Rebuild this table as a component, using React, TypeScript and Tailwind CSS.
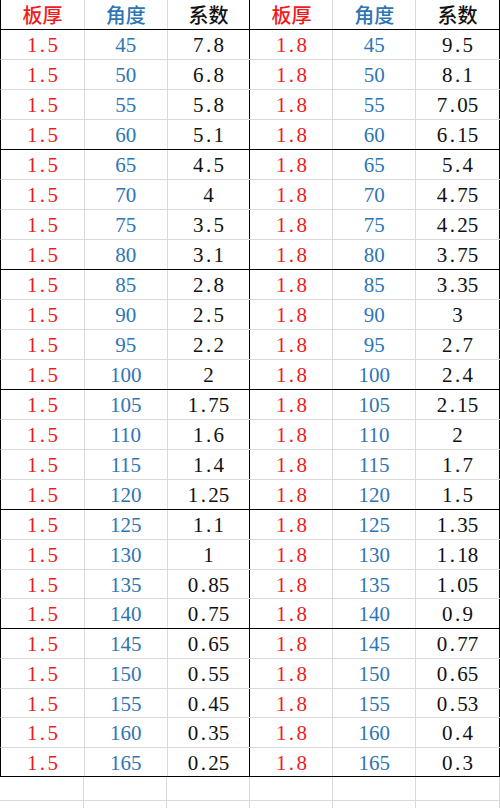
import React from "react";

const left = ["7.8","6.8","5.8","5.1","4.5","4","3.5","3.1","2.8","2.5","2.2","2","1.75","1.6","1.4","1.25","1.1","1","0.85","0.75","0.65","0.55","0.45","0.35","0.25"];
const right = ["9.5","8.1","7.05","6.15","5.4","4.75","4.25","3.75","3.35","3","2.7","2.4","2.15","2","1.7","1.5","1.35","1.18","1.05","0.9","0.77","0.65","0.53","0.4","0.3"];

const RED = "text-[#f21b1b]";
const BLUE = "text-[#2e75b6]";
const BLACK = "text-[#111111]";

function Num({ s }: { s: string }) {
  return (
    <span className="whitespace-nowrap pt-[2px]">
      {s.split("").map((c, i) =>
        c === "." ? (
          <span key={i} className="inline-block w-[10px] text-center">.</span>
        ) : (
          <span key={i}>{c}</span>
        )
      )}
    </span>
  );
}

function Cell({ children, color, black, w }: { children?: React.ReactNode; color?: string; black?: boolean; w: string }) {
  return (
    <div
      className={`${w} h-full flex items-center justify-center border-r ${black ? "border-r-black" : "border-r-[#dadada]"} ${color ?? ""}`}
    >
      {children}
    </div>
  );
}

const widths = ["w-[84px]", "w-[83px]", "w-[83px]", "w-[83px]", "w-[83px]", "w-[84px]"];

function Row({ vals, h, sep }: { vals: string[]; h: string; sep?: boolean }) {
  return (
    <div className={`flex ${h} border-b ${sep ? "border-b-black" : "border-b-[#dadada]"} border-l border-l-black`}>
      <Cell w={widths[0]} color={RED}><Num s={vals[0]} /></Cell>
      <Cell w={widths[1]} color={BLUE}><Num s={vals[1]} /></Cell>
      <Cell w={widths[2]} color={BLACK} black><Num s={vals[2]} /></Cell>
      <Cell w={widths[3]} color={RED}><Num s={vals[3]} /></Cell>
      <Cell w={widths[4]} color={BLUE}><Num s={vals[4]} /></Cell>
      <Cell w={widths[5]} color={BLACK} black><Num s={vals[5]} /></Cell>
    </div>
  );
}

function EmptyRow({ h }: { h: string }) {
  return (
    <div className={`flex ${h} border-b border-b-[#dadada]`}>
      {widths.map((w, i) => (
        <div key={i} className={`${w} h-full border-r border-r-[#dadada]`} />
      ))}
    </div>
  );
}

export default function App() {
  const heights = [
    "h-[30px]","h-[30px]","h-[30px]","h-[30px]",
    "h-[30px]","h-[30px]","h-[30px]","h-[30px]",
    "h-[30px]","h-[30px]","h-[30px]","h-[30px]",
    "h-[30px]","h-[30px]","h-[30px]","h-[30px]",
    "h-[30px]","h-[30px]","h-[29px]","h-[30px]",
    "h-[30px]","h-[30px]","h-[29px]","h-[30px]","h-[29px]",
  ];
  const angles = Array.from({ length: 25 }, (_, i) => String(45 + i * 5));
  const seps = new Set([3, 7, 11, 15, 19, 24]);
  return (
    <div
      className="w-[500px] h-[808px] overflow-hidden bg-white text-[21px] leading-none"
      style={{ fontFamily: '"Liberation Serif", "Noto Sans CJK SC", serif' }}
    >
      <div
        className="flex h-[30px] border-b border-b-black border-l border-l-black font-medium text-[20px]"
        style={{ fontFamily: '"Noto Sans CJK SC", sans-serif' }}
      >
        <Cell w={widths[0]} color={RED}>板厚</Cell>
        <Cell w={widths[1]} color={BLUE}>角度</Cell>
        <Cell w={widths[2]} color={BLACK} black>系数</Cell>
        <Cell w={widths[3]} color={RED}>板厚</Cell>
        <Cell w={widths[4]} color={BLUE}>角度</Cell>
        <Cell w={widths[5]} color={BLACK} black>系数</Cell>
      </div>
      {angles.map((a, i) => (
        <Row
          key={i}
          h={heights[i]}
          sep={seps.has(i)}
          vals={["1.5", a, left[i], "1.8", a, right[i]]}
        />
      ))}
      <EmptyRow h="h-[24px]" />
      <EmptyRow h="h-[24px]" />
    </div>
  );
}
